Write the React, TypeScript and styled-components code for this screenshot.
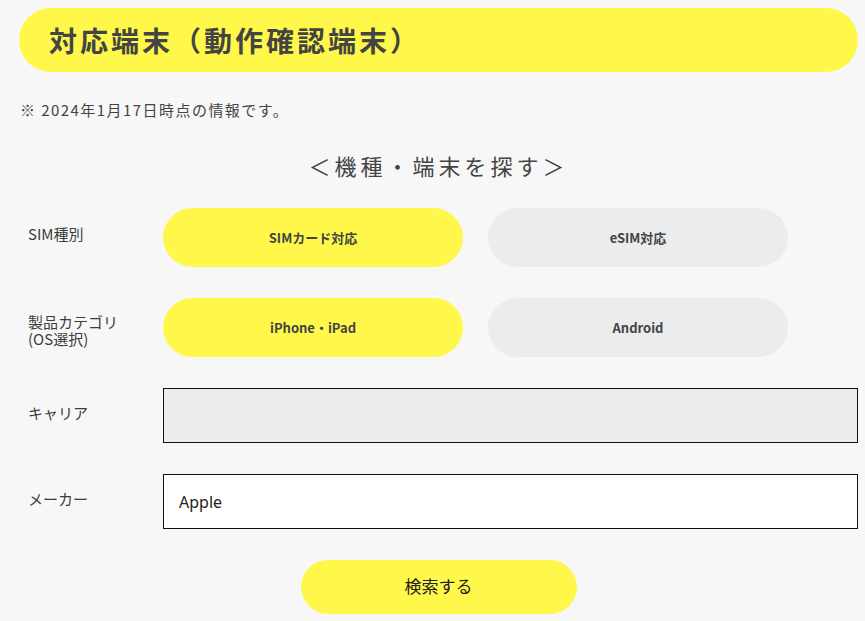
import React from "react";
import styled, { createGlobalStyle } from "styled-components";

const GlobalStyle = createGlobalStyle`
  html, body {
    margin: 0;
    padding: 0;
    background: #f7f7f7;
  }
  body {
    font-family: "Noto Sans CJK JP", "Noto Sans", sans-serif;
    color: #444;
  }
`;

const YELLOW = "#fff84a";
const GREY = "#ebecee";

const Page = styled.div`
  padding: 8px 7px 8px 19px;
  display: flex;
  flex-direction: column;
`;

const Heading = styled.h2`
  margin: 0;
  height: 64px;
  border-radius: 32px;
  background: ${YELLOW};
  display: flex;
  align-items: center;
  padding-left: 30px;
  font-size: 28px;
  font-weight: 700;
  letter-spacing: 3px;
  color: #444;
`;

const Note = styled.p`
  margin: 28px 0 0 1px;
  font-size: 15px;
  font-weight: 400;
  letter-spacing: 1.45px;
  line-height: 20px;
  color: #444;
`;

const SearchTitle = styled.h3`
  margin: 30px 0 0;
  text-align: center;
  font-size: 22px;
  font-weight: 400;
  letter-spacing: 4px;
  line-height: 30px;
  color: #444;
`;

const Form = styled.div`
  margin-top: 28px;
  display: flex;
  flex-direction: column;
  gap: 31px;
`;

const Row = styled.div`
  display: grid;
  grid-template-columns: 144px 1fr;
  align-items: center;
`;

const Label = styled.div<{ $offset?: number }>`
  padding-left: 9px;
  font-size: 15px;
  font-weight: 400;
  line-height: 17px;
  color: #3c3c3c;
  transform: translateY(${(p) => p.$offset ?? -3}px);
`;

const LabelLine = styled.span`
  display: block;
`;

const Choices = styled.div`
  display: flex;
  gap: 25px;
`;

const Choice = styled.button<{ $active?: boolean }>`
  width: 300px;
  height: 59px;
  border: none;
  border-radius: 30px;
  background: ${(p) => (p.$active ? YELLOW : GREY)};
  font-family: "Noto Sans CJK JP", "Noto Sans", sans-serif;
  font-size: 13px;
  font-weight: 700;
  color: #444;
  padding: 0;
  cursor: pointer;
`;

const Field = styled.div<{ $filled?: boolean }>`
  box-sizing: border-box;
  height: 55px;
  border: 1px solid #111;
  background: ${(p) => (p.$filled ? "#fff" : GREY)};
  display: flex;
  align-items: center;
  padding-left: 15px;
  font-family: "Noto Sans", "Noto Sans CJK JP", sans-serif;
  font-size: 16px;
  color: #222;
`;

const SubmitWrap = styled.div`
  display: flex;
  justify-content: center;
`;

const Submit = styled.button`
  width: 276px;
  height: 54px;
  border: none;
  border-radius: 27px;
  background: ${YELLOW};
  font-family: "Noto Sans CJK JP", "Noto Sans", sans-serif;
  font-size: 17px;
  color: #222;
  padding: 0 0 4px;
  cursor: pointer;
`;

export default function App() {
  return (
    <>
      <GlobalStyle />
      <Page>
        <Heading>対応端末（動作確認端末）</Heading>
        <Note>※ 2024年1月17日時点の情報です。</Note>
        <SearchTitle>＜機種・端末を探す＞</SearchTitle>
        <Form>
          <Row>
            <Label $offset={-4}>SIM種別</Label>
            <Choices>
              <Choice $active>SIMカード対応</Choice>
              <Choice>eSIM対応</Choice>
            </Choices>
          </Row>
          <Row>
            <Label $offset={2}>
              <LabelLine>製品カテゴリ</LabelLine>
              <LabelLine>(OS選択)</LabelLine>
            </Label>
            <Choices>
              <Choice $active>iPhone・iPad</Choice>
              <Choice>Android</Choice>
            </Choices>
          </Row>
          <Row>
            <Label>キャリア</Label>
            <Field />
          </Row>
          <Row>
            <Label>メーカー</Label>
            <Field $filled>Apple</Field>
          </Row>
          <SubmitWrap>
            <Submit>検索する</Submit>
          </SubmitWrap>
        </Form>
      </Page>
    </>
  );
}
